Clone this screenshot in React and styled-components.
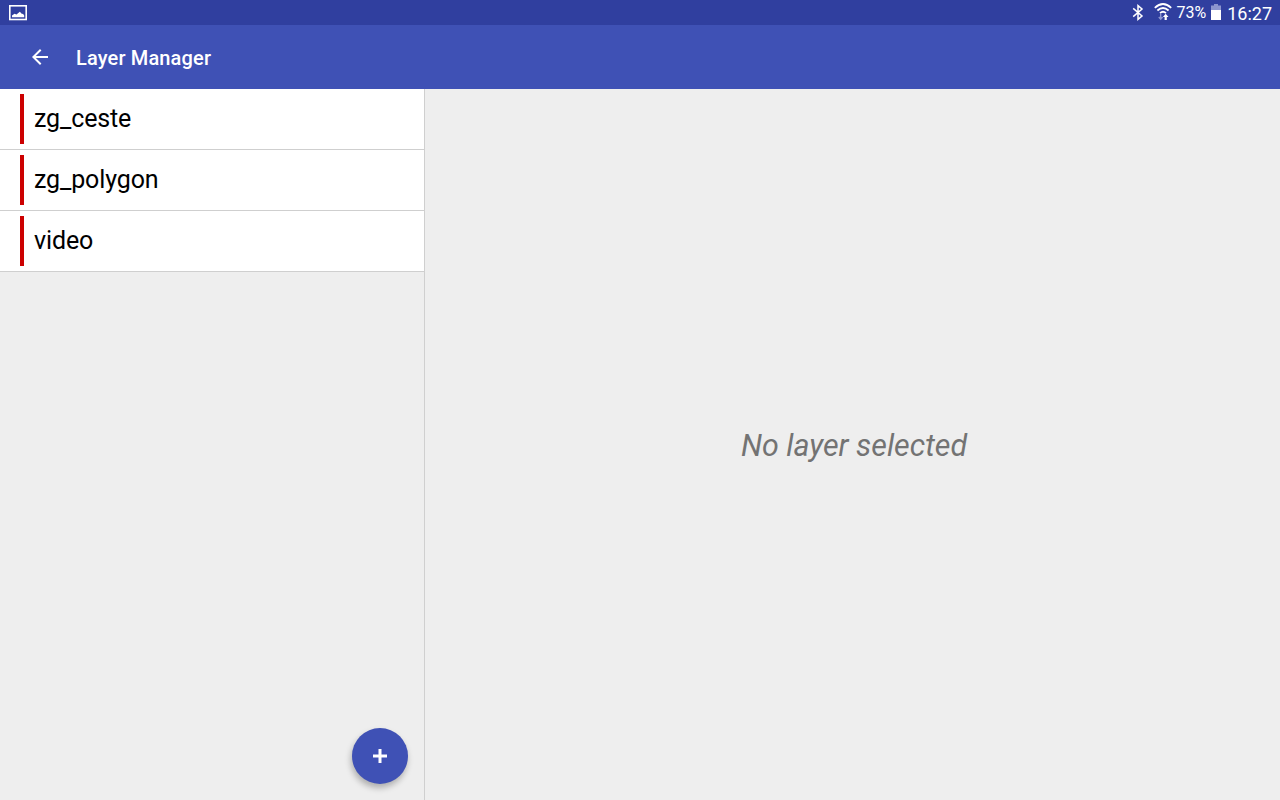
import React from "react";
import styled, { createGlobalStyle } from "styled-components";

const layers = [
  { name: "zg_ceste", color: "#cc0000" },
  { name: "zg_polygon", color: "#cc0000" },
  { name: "video", color: "#cc0000" },
];

const App = () => {
  return (
    <Screen>
      <GlobalStyle />
      <StatusBar>
        <PictureIcon />
        <StatusIcons>
          <BluetoothIcon />
          <WifiIcon />
          <Percent>73%</Percent>
          <BatteryIcon />
          <Clock>16:27</Clock>
        </StatusIcons>
      </StatusBar>
      <AppBar>
        <BackButton aria-label="Back">
          <BackIcon />
        </BackButton>
        <Title>Layer Manager</Title>
      </AppBar>
      <Content>
        <Sidebar>
          {layers.map((layer) => (
            <LayerRow key={layer.name}>
              <Stripe $color={layer.color} />
              <LayerName>{layer.name}</LayerName>
            </LayerRow>
          ))}
          <AddButton aria-label="Add layer">
            <PlusIcon />
          </AddButton>
        </Sidebar>
        <Detail>
          <Empty>No layer selected</Empty>
        </Detail>
      </Content>
    </Screen>
  );
};

const PictureIcon = () => (
  <svg width="18" height="16" viewBox="0 0 18 16">
    <rect x="0.8" y="0.8" width="16.4" height="13.7" fill="none" stroke="#fff" strokeWidth="1.6" />
    <path d="M3 12.2V10.6L5.5 8.8L7.5 9.6L10.8 6.8L13 9L14 8.8L15.2 10.5V12.2Z" fill="#fff" />
  </svg>
);

const BluetoothIcon = () => (
  <svg width="12" height="17" viewBox="0 0 12 17">
    <path
      d="M1.2 4.4L10 12L6 15.4V1.6L10 5L1.2 12.6"
      fill="none"
      stroke="#fff"
      strokeWidth="1.5"
    />
  </svg>
);

const WifiIcon = () => (
  <svg width="18" height="19" viewBox="0 0 18 19">
    <g fill="none" stroke="#fff" strokeWidth="1.8">
      <path d="M0.8 5.8Q9 -1.8 17.2 5.8" />
      <path d="M3.4 8.5Q9 3.4 14.6 8.5" />
      <path d="M6 11.1Q9 8.5 12 11.1" />
    </g>
    <path d="M6.7 12V17.2M4.8 15L6.7 17.2L8.6 15" fill="none" stroke="#8d96d0" strokeWidth="1.4" />
    <path d="M10.6 18V15H8.9L11.7 11.8L14.5 15H12.8V18Z" fill="#fff" />
  </svg>
);

const BatteryIcon = () => (
  <svg width="10" height="16" viewBox="0 0 10 16">
    <path d="M3 0H7V1.5H10V6H0V1.5H3Z" fill="#8c95ce" />
    <path d="M0 6H10V16H0Z" fill="#fff" />
  </svg>
);

const BackIcon = () => (
  <svg width="24" height="24" viewBox="0 0 24 24">
    <path d="M20 11H7.83l5.59-5.59L12 4l-8 8 8 8 1.41-1.41L7.83 13H20v-2z" fill="#fff" />
  </svg>
);

const PlusIcon = () => (
  <svg width="14" height="14" viewBox="0 0 14 14">
    <path d="M7 0V14M0 7H14" stroke="#fff" strokeWidth="3" />
  </svg>
);

const GlobalStyle = createGlobalStyle`
  * {
    box-sizing: border-box;
  }
  body {
    margin: 0;
    font-family: Roboto, sans-serif;
  }
`;

const Screen = styled.div`
  display: flex;
  flex-direction: column;
  height: 100vh;
  overflow: hidden;
  background: #eeeeee;
`;

const StatusBar = styled.div`
  display: flex;
  flex: none;
  justify-content: space-between;
  height: 25px;
  padding: 5px 8px 0 9px;
  background: #303f9f;
  color: white;
`;

const StatusIcons = styled.div`
  display: flex;
  align-items: flex-start;
  margin-top: -2px;
  svg {
    display: block;
    margin-top: 1px;
  }
  svg:nth-of-type(2) {
    margin: -1px 4px 0 10px;
  }
  svg:nth-of-type(3) {
    margin: 1px 6px 0 5px;
  }
`;

const Percent = styled.span`
  font-size: 16px;
  line-height: 20px;
`;

const Clock = styled.span`
  font-size: 18px;
  line-height: 22px;
`;

const AppBar = styled.header`
  display: flex;
  flex: none;
  align-items: center;
  height: 64px;
  padding-left: 28px;
  background: #3f51b5;
`;

const BackButton = styled.button`
  display: flex;
  margin: 0 24px 0 0;
  padding: 0;
  border: 0;
  background: none;
`;

const Title = styled.h1`
  margin: 2px 0 0;
  color: white;
  font-size: 20px;
  font-weight: 500;
  letter-spacing: 0.15px;
`;

const Content = styled.main`
  display: flex;
  flex: 1;
  min-height: 0;
`;

const Sidebar = styled.div`
  position: relative;
  width: 425px;
  border-right: 1px solid #cfcfcf;
`;

const LayerRow = styled.div`
  display: flex;
  align-items: center;
  height: 61px;
  padding-left: 20px;
  border-bottom: 1px solid #cfcfcf;
  background: white;
`;

const Stripe = styled.div`
  width: 4px;
  height: 50px;
  margin-right: 10px;
  background: ${(props) => props.$color};
`;

const LayerName = styled.span`
  padding-bottom: 2px;
  color: black;
  font-size: 25px;
  letter-spacing: -0.12px;
`;

const AddButton = styled.button`
  position: absolute;
  right: 16px;
  bottom: 16px;
  display: flex;
  align-items: center;
  justify-content: center;
  width: 56px;
  height: 56px;
  padding: 0;
  border: 0;
  border-radius: 50%;
  background: #3f51b5;
  box-shadow: -1px 4px 6px rgba(0, 0, 0, 0.27);
`;

const Detail = styled.section`
  display: flex;
  flex: 1;
  align-items: center;
  justify-content: center;
  padding: 2px 0 0 3px;
`;

const Empty = styled.p`
  margin: 0;
  color: #737373;
  font-size: 30.4px;
  font-style: italic;
`;

export default App;
